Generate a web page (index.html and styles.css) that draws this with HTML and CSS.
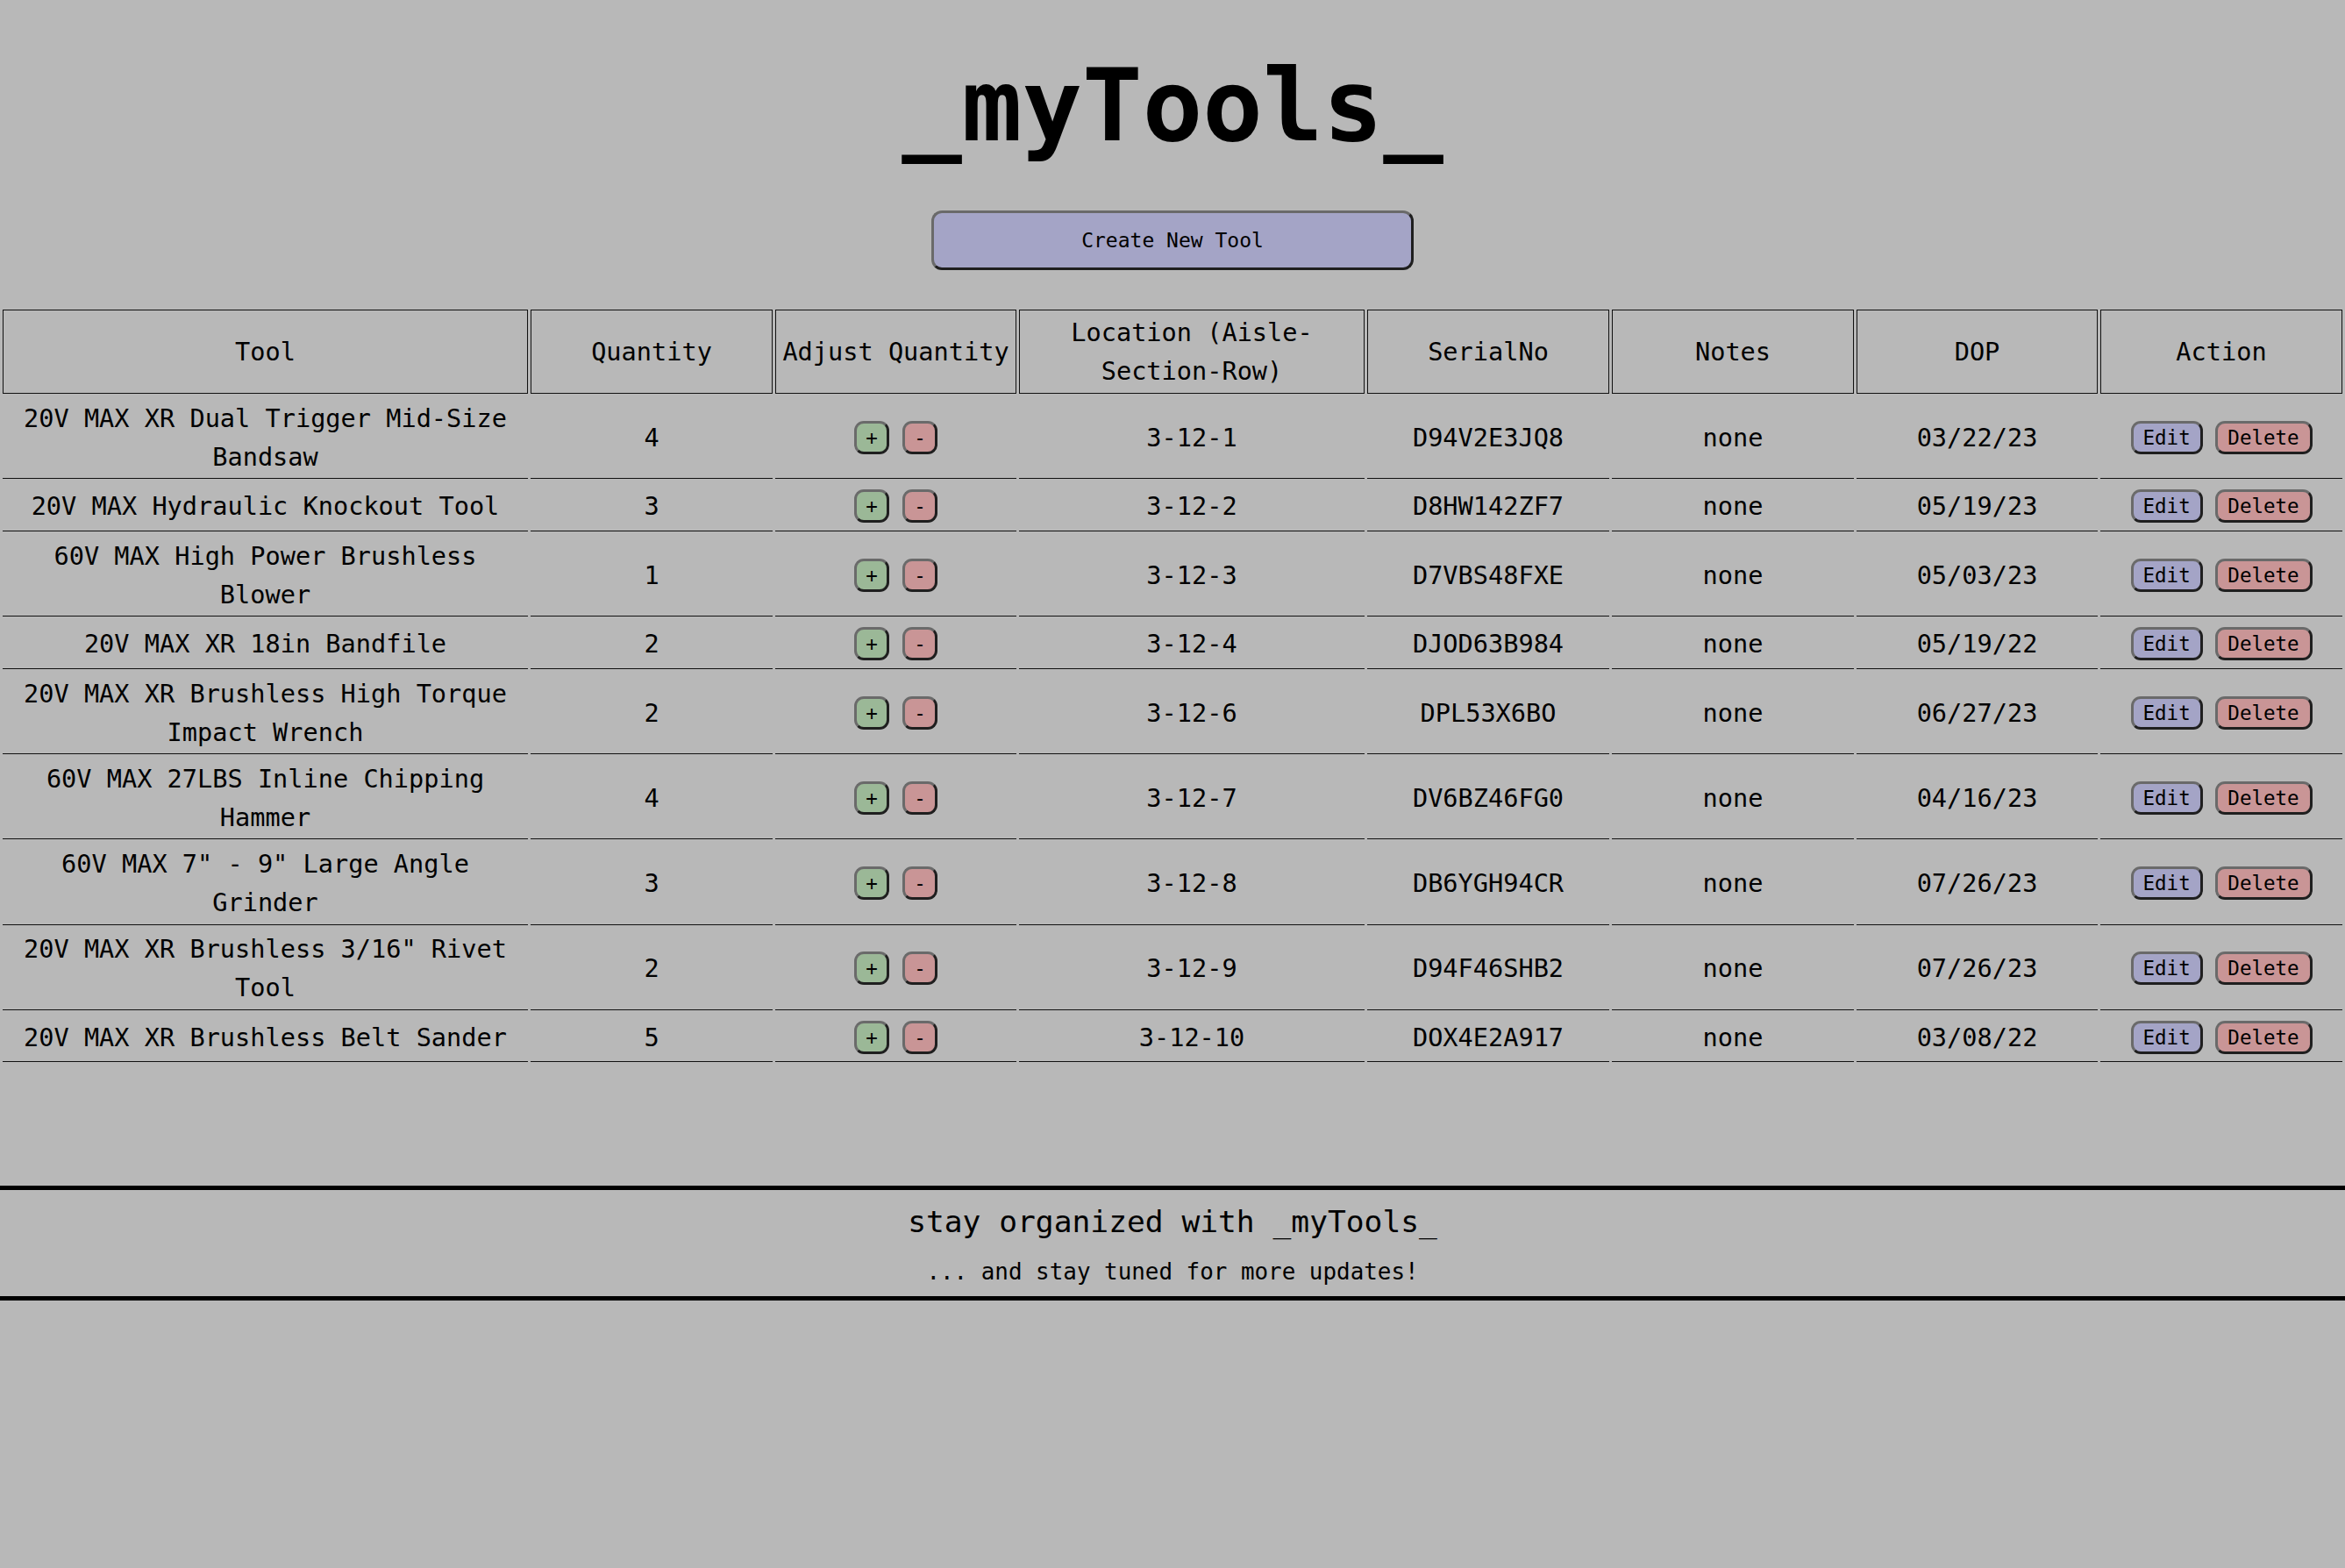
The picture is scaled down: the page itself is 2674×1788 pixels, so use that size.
FILE: index.html
```html
<!DOCTYPE html>
<html lang="en">
<head>
<meta charset="utf-8">
<title>_myTools_</title>
<link rel="stylesheet" href="styles.css">
</head>
<body>
<header class="top">
  <h1 class="title">_myTools_</h1>
  <button class="create-btn">Create New Tool</button>
</header>

<table class="tools">
  <thead>
    <tr>
      <th class="c-tool">Tool</th>
      <th class="c-qty">Quantity</th>
      <th class="c-adj">Adjust Quantity</th>
      <th class="c-loc">Location (Aisle-Section-Row)</th>
      <th class="c-serial">SerialNo</th>
      <th class="c-notes">Notes</th>
      <th class="c-dop">DOP</th>
      <th class="c-action">Action</th>
    </tr>
  </thead>
  <tbody>
    <tr>
      <td>20V MAX XR Dual Trigger Mid-Size Bandsaw</td><td>4</td>
      <td><div class="btns adj"><button class="sm plus">+</button><button class="sm minus">-</button></div></td>
      <td>3-12-1</td><td>D94V2E3JQ8</td><td>none</td><td>03/22/23</td>
      <td><div class="btns act"><button class="sm edit">Edit</button><button class="sm del">Delete</button></div></td>
    </tr>
    <tr>
      <td>20V MAX Hydraulic Knockout Tool</td><td>3</td>
      <td><div class="btns adj"><button class="sm plus">+</button><button class="sm minus">-</button></div></td>
      <td>3-12-2</td><td>D8HW142ZF7</td><td>none</td><td>05/19/23</td>
      <td><div class="btns act"><button class="sm edit">Edit</button><button class="sm del">Delete</button></div></td>
    </tr>
    <tr>
      <td>60V MAX High Power Brushless Blower</td><td>1</td>
      <td><div class="btns adj"><button class="sm plus">+</button><button class="sm minus">-</button></div></td>
      <td>3-12-3</td><td>D7VBS48FXE</td><td>none</td><td>05/03/23</td>
      <td><div class="btns act"><button class="sm edit">Edit</button><button class="sm del">Delete</button></div></td>
    </tr>
    <tr>
      <td>20V MAX XR 18in Bandfile</td><td>2</td>
      <td><div class="btns adj"><button class="sm plus">+</button><button class="sm minus">-</button></div></td>
      <td>3-12-4</td><td>DJOD63B984</td><td>none</td><td>05/19/22</td>
      <td><div class="btns act"><button class="sm edit">Edit</button><button class="sm del">Delete</button></div></td>
    </tr>
    <tr>
      <td>20V MAX XR Brushless High Torque Impact Wrench</td><td>2</td>
      <td><div class="btns adj"><button class="sm plus">+</button><button class="sm minus">-</button></div></td>
      <td>3-12-6</td><td>DPL53X6BO</td><td>none</td><td>06/27/23</td>
      <td><div class="btns act"><button class="sm edit">Edit</button><button class="sm del">Delete</button></div></td>
    </tr>
    <tr>
      <td>60V MAX 27LBS Inline Chipping Hammer</td><td>4</td>
      <td><div class="btns adj"><button class="sm plus">+</button><button class="sm minus">-</button></div></td>
      <td>3-12-7</td><td>DV6BZ46FG0</td><td>none</td><td>04/16/23</td>
      <td><div class="btns act"><button class="sm edit">Edit</button><button class="sm del">Delete</button></div></td>
    </tr>
    <tr>
      <td>60V MAX 7" - 9" Large Angle Grinder</td><td>3</td>
      <td><div class="btns adj"><button class="sm plus">+</button><button class="sm minus">-</button></div></td>
      <td>3-12-8</td><td>DB6YGH94CR</td><td>none</td><td>07/26/23</td>
      <td><div class="btns act"><button class="sm edit">Edit</button><button class="sm del">Delete</button></div></td>
    </tr>
    <tr>
      <td>20V MAX XR Brushless 3/16" Rivet Tool</td><td>2</td>
      <td><div class="btns adj"><button class="sm plus">+</button><button class="sm minus">-</button></div></td>
      <td>3-12-9</td><td>D94F46SHB2</td><td>none</td><td>07/26/23</td>
      <td><div class="btns act"><button class="sm edit">Edit</button><button class="sm del">Delete</button></div></td>
    </tr>
    <tr>
      <td>20V MAX XR Brushless Belt Sander</td><td>5</td>
      <td><div class="btns adj"><button class="sm plus">+</button><button class="sm minus">-</button></div></td>
      <td>3-12-10</td><td>DOX4E2A917</td><td>none</td><td>03/08/22</td>
      <td><div class="btns act"><button class="sm edit">Edit</button><button class="sm del">Delete</button></div></td>
    </tr>
  </tbody>
</table>

<footer class="foot">
  <h2 class="foot-title">stay organized with _myTools_</h2>
  <p class="foot-sub">... and stay tuned for more updates!</p>
</footer>
</body>
</html>
```
FILE: styles.css
```css
html, body {
  margin: 0;
  padding: 0;
  background: #b8b8b8;
}
body {
  font-family: "DejaVu Sans Mono", "Liberation Mono", monospace;
  color: #000;
  min-height: 1788px;
}
.top {
  display: flex;
  flex-direction: column;
  align-items: center;
  padding-top: 54px;
}
.title {
  margin: 0;
  font-size: 114px;
  font-weight: bold;
  line-height: normal;
  letter-spacing: 0;
}
.create-btn {
  margin-top: 53px;
  box-sizing: border-box;
  width: 550px;
  height: 68px;
  background: #a4a4c6;
  border: 3px solid;
  border-color: #6a6a6a #1f1f1f #1f1f1f #6a6a6a;
  border-radius: 12px;
  font-family: "DejaVu Sans Mono", monospace;
  font-size: 23px;
  color: #000;
  padding: 0;
}
.tools {
  margin-top: 42px;
  width: 100%;
  table-layout: fixed;
  border-collapse: separate;
  border-spacing: 3px;
  font-size: 28.6px;
  line-height: 44px;
}
.tools th {
  box-sizing: border-box;
  font-weight: normal;
  border: 1px solid #111;
  padding: 3px 5px;
  text-align: center;
  vertical-align: middle;
}
.tools td {
  border-bottom: 1px solid #111;
  padding: 2.6px 5px;
  text-align: center;
  vertical-align: middle;
}
.c-tool { width: 599px; }
.c-qty { width: 276px; }
.c-adj { width: 275px; }
.c-loc { width: 394px; }
.c-serial { width: 276px; }
.c-notes { width: 276px; }
.c-dop { width: 275px; }
.c-action { width: 276px; }

.btns {
  display: flex;
  justify-content: center;
  align-items: center;
  padding: 6.3px 0;
}
.btns.adj { gap: 15px; }
.btns.act { gap: 14px; }
.sm {
  box-sizing: border-box;
  height: 38px;
  margin: 0;
  font-family: "DejaVu Sans Mono", monospace;
  font-size: 22.5px;
  line-height: 26px;
  color: #000;
  border: 3px solid;
  border-color: #6a6a6a #1f1f1f #1f1f1f #6a6a6a;
  border-radius: 11px;
  padding: 3px 11px;
}
.plus, .minus { width: 40px; padding: 3px 0; }
.plus { background: #9bb897; }
.minus { background: #c99596; }
.edit { background: #a4a4c6; width: 82px; }
.del { background: #c99596; width: 111px; }

.foot {
  margin-top: 138px;
  border-top: 5px solid #000;
  border-bottom: 5px solid #000;
  padding: 14px 0 11px;
  text-align: center;
}
.foot-title {
  margin: 0;
  font-size: 34.6px;
  font-weight: normal;
  line-height: 44px;
}
.foot-sub {
  margin: 18px 0 0;
  font-size: 25.9px;
  line-height: 34px;
}
```
